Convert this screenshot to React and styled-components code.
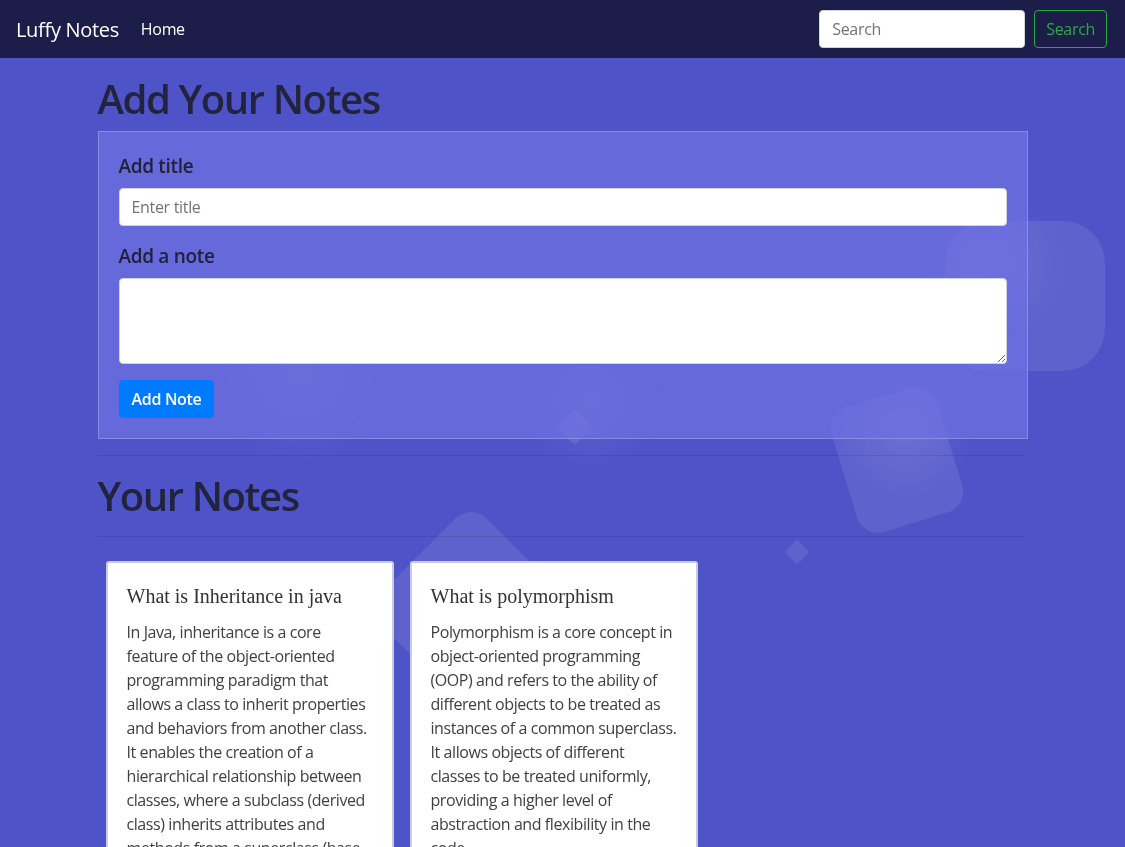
import React from 'react'
import styled, { createGlobalStyle } from 'styled-components'

const GlobalStyle = createGlobalStyle`
  html, body {
    margin: 0;
    padding: 0;
    scrollbar-width: none;
  }
  body::-webkit-scrollbar { display: none; }
  body {
    background: #4e53c8;
    font-family: "Open Sans", "Noto Sans", sans-serif;
    letter-spacing: -0.02em;
    color: #212529;
  }
  * { box-sizing: border-box; }
`

const Backdrop = styled.svg`
  position: fixed;
  top: 0;
  left: 0;
  width: 1125px;
  height: 847px;
  z-index: 0;
  pointer-events: none;
`

const Page = styled.div`
  position: relative;
  z-index: 1;
`

const Navbar = styled.nav`
  display: flex;
  align-items: center;
  justify-content: space-between;
  height: 58px;
  padding: 0 18px 0 16px;
  background: #1c1d49;
`

const NavLeft = styled.div`
  display: flex;
  align-items: center;
  gap: 22px;
`

const Brand = styled.a`
  color: #fff;
  font-size: 20px;
  text-decoration: none;
`

const NavLink = styled.a`
  color: #fff;
  font-size: 16px;
  text-decoration: none;
`

const SearchForm = styled.form`
  display: flex;
  gap: 9px;
`

const SearchInput = styled.input`
  width: 206px;
  height: 38px;
  padding: 6px 12px;
  font: inherit;
  font-size: 16px;
  letter-spacing: inherit;
  border: 1px solid #ced4da;
  border-radius: 4px;
  &::placeholder { color: #6c757d; }
`

const OutlineButton = styled.button`
  height: 38px;
  padding: 0 11px;
  font: inherit;
  font-size: 16px;
  letter-spacing: inherit;
  color: #28a745;
  background: transparent;
  border: 1px solid #28a745;
  border-radius: 4px;
`

const Container = styled.main`
  max-width: 960px;
  margin: 17px auto 0;
  padding: 0 15px;
`

const Heading = styled.h1`
  margin: 0 0 8px;
  font-size: 40px;
  font-weight: 600;
  line-height: 48px;
  letter-spacing: -0.035em;
  color: #22233c;
`

const FormBox = styled.div`
  padding: 20px;
  background: rgba(110, 112, 224, 0.75);
  border: 1px solid rgba(255, 255, 255, 0.22);
`

const Group = styled.div`
  margin-bottom: 16px;
`

const Label = styled.label`
  display: block;
  height: 28px;
  margin-bottom: 8px;
  font-size: 19px;
  font-weight: 600;
  line-height: 28px;
  color: #20213a;
`

const TextInput = styled.input`
  display: block;
  width: 100%;
  height: 38px;
  padding: 6px 12px;
  font: inherit;
  font-size: 16px;
  letter-spacing: inherit;
  background: #fff;
  border: 1px solid #ced4da;
  border-radius: 4px;
  &::placeholder { color: #6c757d; }
`

const TextArea = styled.textarea`
  display: block;
  width: 100%;
  height: 86px;
  padding: 6px 12px;
  font: inherit;
  font-size: 16px;
  border: 1px solid #ced4da;
  border-radius: 4px;
`

const PrimaryButton = styled.button`
  height: 38px;
  padding: 0 12px;
  font: inherit;
  font-size: 16px;
  font-weight: 600;
  letter-spacing: inherit;
  color: #fff;
  background: #007bff;
  border: 1px solid #007bff;
  border-radius: 4px;
`

const Rule = styled.hr`
  margin: 16px 0;
  border: 0;
  border-top: 1px solid rgba(0, 0, 0, 0.1);
`

const NotesRow = styled.div`
  display: flex;
  flex-wrap: wrap;
`

const Card = styled.div`
  width: 288px;
  margin: 8px;
  background: #fff;
  border: 2px solid #c9cbe0;
  border-radius: 3px;
`

const CardBody = styled.div`
  padding: 21px 19px;
`

const CardTitle = styled.h5`
  margin: 0 0 12px;
  font-family: "Liberation Serif", serif;
  font-size: 20px;
  font-weight: 400;
  line-height: 24px;
  letter-spacing: 0;
  color: #333;
`

const CardText = styled.p`
  margin: 0;
  font-size: 16px;
  line-height: 24px;
  letter-spacing: -0.0263em;
  color: #404040;
`

const notes = [
  {
    title: 'What is Inheritance in java',
    text: 'In Java, inheritance is a core feature of the object-oriented programming paradigm that allows a class to inherit properties and behaviors from another class. It enables the creation of a hierarchical relationship between classes, where a subclass (derived class) inherits attributes and methods from a superclass (base class).',
  },
  {
    title: 'What is polymorphism',
    text: 'Polymorphism is a core concept in object-oriented programming (OOP) and refers to the ability of different objects to be treated as instances of a common superclass. It allows objects of different classes to be treated uniformly, providing a higher level of abstraction and flexibility in the code.',
  },
]

function Decor() {
  return (
    <Backdrop viewBox="0 0 1125 847">
      <defs>
        <radialGradient id="glow">
          <stop offset="0" stopColor="#fff" stopOpacity="0.09" />
          <stop offset="1" stopColor="#fff" stopOpacity="0" />
        </radialGradient>
      </defs>
      <circle cx="300" cy="370" r="95" fill="url(#glow)" />
      <circle cx="985" cy="265" r="80" fill="url(#glow)" />
      <circle cx="590" cy="400" r="70" fill="url(#glow)" />
      <circle cx="905" cy="430" r="70" fill="url(#glow)" />
      <g fill="#fff" fillOpacity="0.09">
        <rect x="945" y="221" width="160" height="150" rx="42" />
        <rect x="842" y="395" width="110" height="130" rx="22" transform="rotate(-17 897 460)" />
        <rect x="788" y="543" width="18" height="18" rx="3" transform="rotate(45 797 552)" />
        <rect x="562" y="414" width="26" height="26" rx="4" transform="rotate(45 575 427)" />
        <rect x="396" y="534" width="150" height="150" rx="22" transform="rotate(45 471 609)" />
      </g>
    </Backdrop>
  )
}

export default function App() {
  return (
    <>
      <GlobalStyle />
      <Decor />
      <Page>
        <Navbar>
          <NavLeft>
            <Brand href="#">Luffy Notes</Brand>
            <NavLink href="#">Home</NavLink>
          </NavLeft>
          <SearchForm onSubmit={(e) => e.preventDefault()}>
            <SearchInput type="search" placeholder="Search" />
            <OutlineButton type="submit">Search</OutlineButton>
          </SearchForm>
        </Navbar>
        <Container>
          <Heading>Add Your Notes</Heading>
          <FormBox>
            <Group>
              <Label htmlFor="title">Add title</Label>
              <TextInput id="title" placeholder="Enter title" />
            </Group>
            <Group>
              <Label htmlFor="note">Add a note</Label>
              <TextArea id="note" rows={3} />
            </Group>
            <PrimaryButton>Add Note</PrimaryButton>
          </FormBox>
          <Rule />
          <Heading>Your Notes</Heading>
          <Rule />
          <NotesRow>
            {notes.map((n) => (
              <Card key={n.title}>
                <CardBody>
                  <CardTitle>{n.title}</CardTitle>
                  <CardText>{n.text}</CardText>
                </CardBody>
              </Card>
            ))}
          </NotesRow>
        </Container>
      </Page>
    </>
  )
}
